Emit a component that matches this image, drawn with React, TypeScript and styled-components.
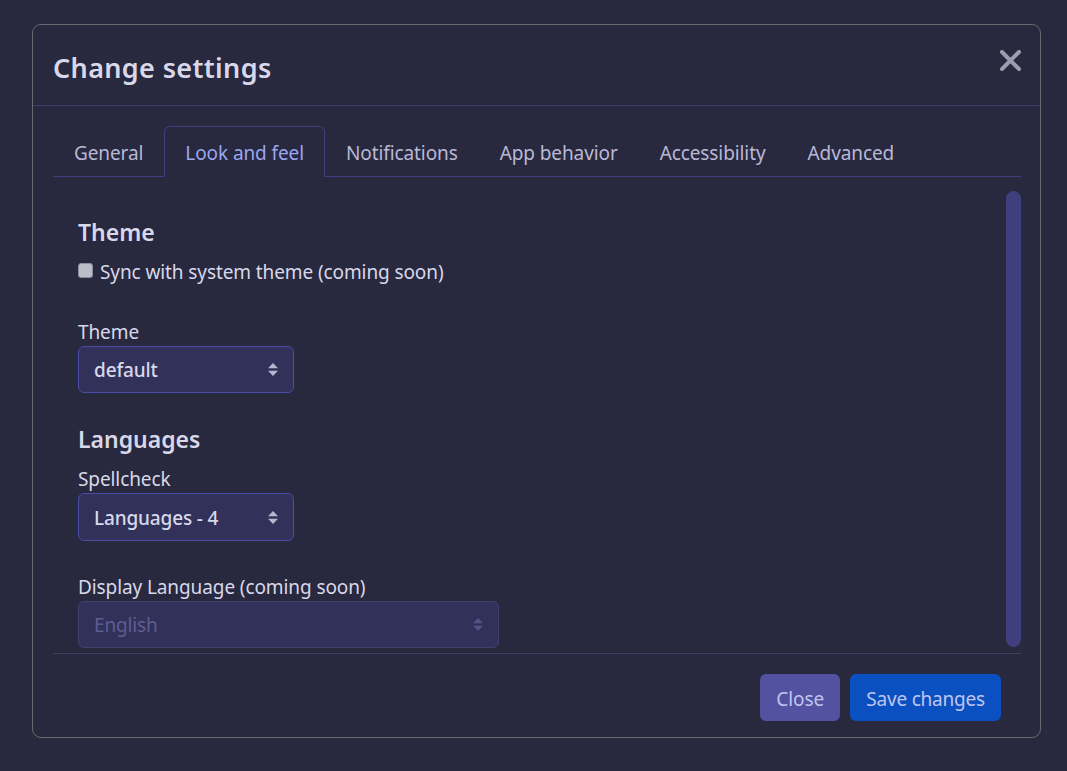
import React from 'react'
import styled, { createGlobalStyle } from 'styled-components'

const GlobalStyle = createGlobalStyle`
  html, body {
    margin: 0;
    height: 100%;
    background: #28283e;
  }
  body {
    font-family: "Noto Sans", "Open Sans", sans-serif;
    color: #d8d8ea;
  }
`

const Page = styled.div`
  box-sizing: border-box;
  width: 1067px;
  height: 771px;
  padding: 24px 26px 33px 32px;
`

const Modal = styled.div`
  box-sizing: border-box;
  height: 714px;
  border: 1px solid #68686f;
  border-radius: 9px;
  display: flex;
  flex-direction: column;
`

const Header = styled.header`
  box-sizing: border-box;
  height: 81px;
  flex: none;
  border-bottom: 1px solid #3d3d72;
  padding: 4px 20px 0;
  display: flex;
  align-items: center;
  justify-content: space-between;
  position: relative;
`

const Title = styled.h1`
  margin: 0;
  font-size: 27px;
  font-weight: 600;
  color: #d8d8ea;
  letter-spacing: 0.35px;
`

const CloseIcon = styled.svg`
  position: absolute;
  top: 25px;
  right: 19px;
  width: 21px;
  height: 21px;
`

const Tabs = styled.nav`
  box-sizing: border-box;
  flex: none;
  height: 51px;
  margin: 20px 19px 0 20px;
  border-bottom: 1px solid #3f3f80;
  display: flex;
`

const Tab = styled.div<{ $active?: boolean }>`
  box-sizing: border-box;
  height: 51px;
  padding: 2px 20px 0;
  display: flex;
  align-items: center;
  font-size: 19px;
  letter-spacing: -0.1px;
  border: 1px solid ${p => (p.$active ? '#3f3f80' : 'transparent')};
  border-bottom: ${p => (p.$active ? '1px solid #28283e' : 'none')};
  border-radius: 6px 6px 0 0;
  color: ${p => (p.$active ? '#9aa6f0' : '#b9b9d6')};
`

const Body = styled.div`
  flex: 1;
  min-height: 0;
  margin: 0 19px 0 20px;
  border-bottom: 1px solid #3d3d66;
  display: flex;
`

const Content = styled.div`
  flex: 1;
  padding: 39px 0 0 25px;
  display: flex;
  flex-direction: column;
  align-items: flex-start;
`

const Scrollbar = styled.div`
  width: 15px;
  flex: none;
  margin: 14px 0 6px;
  border-radius: 8px;
  background: #3f3f7e;
`

const SectionTitle = styled.h2<{ $top?: number }>`
  margin: ${p => p.$top ?? 0}px 0 0;
  font-size: 23px;
  line-height: 32px;
  font-weight: 600;
  color: #d8d8ea;
`

const CheckRow = styled.label`
  display: flex;
  align-items: flex-start;
  gap: 7px;
  font-size: 19px;
  letter-spacing: -0.1px;
  line-height: 27px;
  margin-top: 11px;
`

const Check = styled.span`
  width: 15px;
  height: 15px;
  margin-top: 4px;
  border-radius: 3px;
  background: #bdbdc9;
  border: 1px solid #8c8c9c;
  box-sizing: border-box;
`

const FieldLabel = styled.div<{ $top: number }>`
  font-size: 19px;
  letter-spacing: -0.1px;
  line-height: 27px;
  margin-top: ${p => p.$top}px;
`

const Select = styled.div<{ $wide?: boolean; $disabled?: boolean; $tall?: boolean }>`
  box-sizing: border-box;
  width: ${p => (p.$wide ? '421px' : '216px')};
  height: ${p => (p.$tall ? '48px' : '47px')};
  padding: ${p => (p.$tall ? '1px' : '0')} 15px 0;
  display: flex;
  align-items: center;
  justify-content: space-between;
  background: #31315a;
  border: 1px solid ${p => (p.$disabled ? '#3f3f70' : '#4b4ba8')};
  border-radius: 6px;
  font-size: 19px;
  letter-spacing: -0.15px;
  font-weight: ${p => (p.$disabled ? 400 : 500)};
  color: ${p => (p.$disabled ? '#5d5d92' : '#d8d8ea')};
`

const Footer = styled.footer`
  flex: none;
  height: 83px;
  box-sizing: border-box;
  padding: 20px 39px 0 0;
  display: flex;
  justify-content: flex-end;
  gap: 10px;
`

const Button = styled.button<{ $primary?: boolean }>`
  height: 47px;
  padding: 2px 16px 0;
  border: none;
  border-radius: 6px;
  font-family: inherit;
  font-size: 19px;
  letter-spacing: ${p => (p.$primary ? '-0.2px' : '-0.05px')};
  color: #c0c4f0;
  background: ${p => (p.$primary ? '#0a50c0' : '#5252a0')};
`

const Arrows = () => (
  <svg width="10" height="13" viewBox="0 0 10 13">
    <path d="M0 5.2 5 0l5 5.2zM0 7.8 5 13l5-5.2z" fill="currentColor" opacity="0.8" />
  </svg>
)

const tabs = ['General', 'Look and feel', 'Notifications', 'App behavior', 'Accessibility', 'Advanced']

export default function App() {
  return (
    <Page>
      <GlobalStyle />
      <Modal>
        <Header>
          <Title>Change settings</Title>
          <CloseIcon viewBox="0 0 21 21">
            <path d="M2 2 19 19M19 2 2 19" stroke="#9c9cae" strokeWidth="4" strokeLinecap="round" />
          </CloseIcon>
        </Header>
        <Tabs>
          {tabs.map(t => (
            <Tab key={t} $active={t === 'Look and feel'}>
              {t}
            </Tab>
          ))}
        </Tabs>
        <Body>
          <Content>
            <SectionTitle>Theme</SectionTitle>
            <CheckRow>
              <Check />
              Sync with system theme (coming soon)
            </CheckRow>
            <FieldLabel $top={33}>Theme</FieldLabel>
            <Select>
              default
              <Arrows />
            </Select>
            <SectionTitle $top={30}>Languages</SectionTitle>
            <FieldLabel $top={11}>Spellcheck</FieldLabel>
            <Select $tall>
              Languages - 4
              <Arrows />
            </Select>
            <FieldLabel $top={33}>Display Language (coming soon)</FieldLabel>
            <Select $wide $disabled>
              English
              <Arrows />
            </Select>
          </Content>
          <Scrollbar />
        </Body>
        <Footer>
          <Button>Close</Button>
          <Button $primary>Save changes</Button>
        </Footer>
      </Modal>
    </Page>
  )
}
